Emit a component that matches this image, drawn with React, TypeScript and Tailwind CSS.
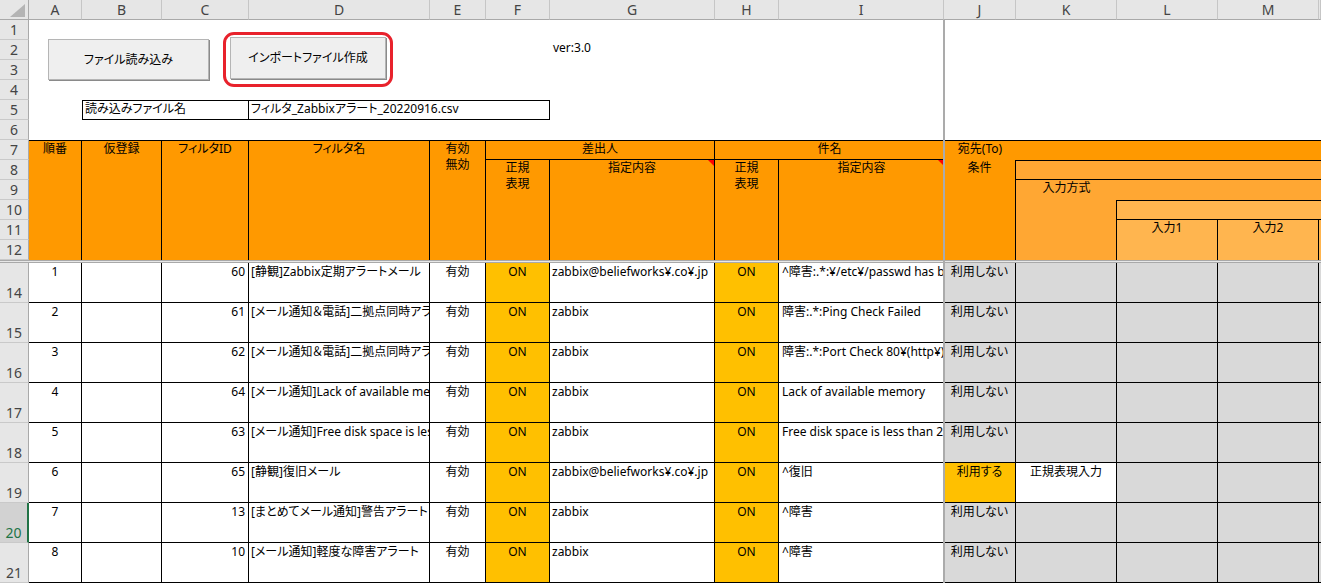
import React from "react";

const COLS =
  "grid grid-cols-[29px_53px_80px_87px_181px_56px_64px_165px_64px_165px_72px_101px_101px_101px_1fr]";
const TXT = "font-['Noto_Sans','Noto_Sans_CJK_JP',sans-serif] [font-feature-settings:'palt'] text-[12px] leading-[16px] text-black";
const HDR = "font-['Noto_Sans',sans-serif] text-[14px] text-[#444]";

const ORANGE = "bg-[#ff9900]";
const KCOL = "bg-[#ffa733]";
const LCOL = "bg-[#ffb54f]";

const letters = ["A", "B", "C", "D", "E", "F", "G", "H", "I", "J", "K", "L", "M", ""];

type Row = {
  n: number;
  a: string;
  c: string;
  d: string;
  g: string;
  i: string;
  use?: boolean;
  sel?: boolean;
};

const rows: Row[] = [
  { n: 14, a: "1", c: "60", d: "[静観]Zabbix定期アラートメール", g: "zabbix@beliefworks¥.co¥.jp", i: "^障害:.*:¥/etc¥/passwd has been changed" },
  { n: 15, a: "2", c: "61", d: "[メール通知＆電話]二拠点同時アラート", g: "zabbix", i: "障害:.*:Ping Check Failed" },
  { n: 16, a: "3", c: "62", d: "[メール通知＆電話]二拠点同時アラート", g: "zabbix", i: "障害:.*:Port Check 80¥(http¥)" },
  { n: 17, a: "4", c: "64", d: "[メール通知]Lack of available memory", g: "zabbix", i: "Lack of available memory" },
  { n: 18, a: "5", c: "63", d: "[メール通知]Free disk space is less than", g: "zabbix", i: "Free disk space is less than 20%" },
  { n: 19, a: "6", c: "65", d: "[静観]復旧メール", g: "zabbix@beliefworks¥.co¥.jp", i: "^復旧", use: true },
  { n: 20, a: "7", c: "13", d: "[まとめてメール通知]警告アラート", g: "zabbix", i: "^障害", sel: true },
  { n: 21, a: "8", c: "10", d: "[メール通知]軽度な障害アラート", g: "zabbix", i: "^障害" },
];

function RowHead({ n, bottom }: { n: number; bottom?: boolean }) {
  return (
    <div
      className={`${HDR} h-full bg-[#e6e6e6] border-b border-r border-b-[#c9c9c9] border-r-[#a9a9a9] flex justify-center ${
        bottom ? "items-end pb-[1px]" : "items-center"
      }`}
    >
      {n}
    </div>
  );
}

function Tri() {
  return (
    <svg className="absolute right-0 top-0" width="6" height="6" viewBox="0 0 6 6">
      <polygon points="0,0 6,0 6,6" fill="#ff0000" />
    </svg>
  );
}

export default function App() {
  return (
    <div className={`relative w-[1321px] h-[583px] overflow-hidden bg-white ${TXT}`}>
      {/* column header */}
      <div className={`${COLS} h-[20px]`}>
        <div className="relative bg-[#e6e6e6] border-r border-b border-[#a9a9a9]">
          <svg className="absolute left-0 top-0" width="29" height="20" viewBox="0 0 29 20">
            <polygon points="25,4 25,17 10,17" fill="#b4b4b4" />
          </svg>
        </div>
        {letters.map((l, i) => (
          <div
            key={i}
            className={`${HDR} bg-[#e6e6e6] border-r border-b border-r-[#c6c6c6] border-b-[#a9a9a9] flex items-center justify-center`}
          >
            {l}
          </div>
        ))}
      </div>

      {/* rows 1-6 */}
      <div className={`${COLS} grid-rows-[repeat(6,20px)]`}>
        <div className="col-start-1 row-start-1"><RowHead n={1} /></div>
        <div className="col-start-1 row-start-2"><RowHead n={2} /></div>
        <div className="col-start-1 row-start-3"><RowHead n={3} /></div>
        <div className="col-start-1 row-start-4"><RowHead n={4} /></div>
        <div className="col-start-1 row-start-5"><RowHead n={5} /></div>
        <div className="col-start-1 row-start-6"><RowHead n={6} /></div>
        <div className="col-start-8 row-start-2 pl-[3px]">ver:3.0</div>
        <div className="col-start-3 col-span-2 row-start-5 border border-black pl-[2px] whitespace-nowrap overflow-hidden">
          読み込みファイル名
        </div>
        <div className="col-start-5 col-span-3 row-start-5 border-t border-b border-r border-black pl-[2px] whitespace-nowrap overflow-hidden">
          フィルタ_Zabbixアラート_20220916.csv
        </div>
      </div>

      {/* header rows 7-12 */}
      <div className={`${COLS} grid-rows-[repeat(6,20px)]`}>
        <div className="col-start-1 row-start-1"><RowHead n={7} /></div>
        <div className="col-start-1 row-start-2"><RowHead n={8} /></div>
        <div className="col-start-1 row-start-3"><RowHead n={9} /></div>
        <div className="col-start-1 row-start-4"><RowHead n={10} /></div>
        <div className="col-start-1 row-start-5"><RowHead n={11} /></div>
        <div className="col-start-1 row-start-6"><RowHead n={12} /></div>

        <div className={`col-start-2 row-start-1 row-span-6 ${ORANGE} border-t border-r border-black text-center`}>順番</div>
        <div className={`col-start-3 row-start-1 row-span-6 ${ORANGE} border-t border-r border-black text-center`}>仮登録</div>
        <div className={`col-start-4 row-start-1 row-span-6 ${ORANGE} border-t border-r border-black text-center`}>フィルタID</div>
        <div className={`col-start-5 row-start-1 row-span-6 ${ORANGE} border-t border-r border-black text-center`}>フィルタ名</div>
        <div className={`col-start-6 row-start-1 row-span-6 ${ORANGE} border-t border-r border-black text-center`}>
          有効
          <br />
          無効
        </div>

        <div className={`col-start-7 col-span-2 row-start-1 ${ORANGE} border-t border-r border-b border-black text-center`}>差出人</div>
        <div className={`col-start-7 row-start-2 row-span-5 ${ORANGE} border-r border-black text-center`}>
          正規
          <br />
          表現
        </div>
        <div className={`relative col-start-8 row-start-2 row-span-5 ${ORANGE} border-r border-black text-center`}>
          指定内容
          <Tri />
        </div>

        <div className={`col-start-9 col-span-2 row-start-1 ${ORANGE} border-t border-b border-black text-center`}>件名</div>
        <div className={`col-start-9 row-start-2 row-span-5 ${ORANGE} border-r border-black text-center`}>
          正規
          <br />
          表現
        </div>
        <div className={`relative col-start-10 row-start-2 row-span-5 ${ORANGE} text-center`}>
          指定内容
          <Tri />
        </div>

        <div className={`col-start-11 col-span-5 row-start-1 ${ORANGE} border-t border-black`}>
          <div className="w-[72px] text-center whitespace-nowrap">宛先(To)</div>
        </div>
        <div className={`col-start-11 row-start-2 row-span-5 ${ORANGE} border-r border-black text-center`}>条件</div>
        <div className={`col-start-12 col-span-4 row-start-2 ${KCOL} border-t border-b border-black`} />
        <div className={`col-start-12 col-span-4 row-start-3 ${KCOL}`}>
          <div className="w-[101px] text-center">入力方式</div>
        </div>
        <div className={`col-start-12 row-start-4 row-span-3 ${KCOL} border-r border-black`} />
        <div className={`col-start-13 col-span-3 row-start-4 ${LCOL} border-t border-b border-black`} />
        <div className={`col-start-13 row-start-5 row-span-2 ${LCOL} border-r border-black text-center`}>入力1</div>
        <div className={`col-start-14 row-start-5 row-span-2 ${LCOL} border-r border-black text-center`}>入力2</div>
        <div className={`col-start-15 row-start-5 row-span-2 ${LCOL}`} />
      </div>

      {/* freeze divider */}
      <div className="h-[3px] border-t border-b border-[#a9a9a9] bg-[#e8e8e8]" />

      {/* data rows */}
      {rows.map((r) => (
        <div key={r.n} className={`${COLS} h-[40px]`}>
          {r.sel ? (
            <div className="font-['Noto_Sans',sans-serif] text-[14px] text-[#217346] bg-[#d2d2d2] border-b border-b-[#c9c9c9] border-r-2 border-r-[#217346] flex justify-center items-end pb-[1px]">
              {r.n}
            </div>
          ) : (
            <RowHead n={r.n} bottom />
          )}
          <div className="border-r border-b border-black text-center pt-[1px]">{r.a}</div>
          <div className="border-r border-b border-black" />
          <div className="border-r border-b border-black text-right pr-[3px] pt-[1px]">{r.c}</div>
          <div className="border-r border-b border-black pl-[2px] pt-[1px] whitespace-nowrap overflow-hidden">{r.d}</div>
          <div className="border-r border-b border-black text-center pt-[1px]">有効</div>
          <div className="bg-[#ffc000] border-r border-b border-black text-center pt-[1px]">ON</div>
          <div className="border-r border-b border-black pl-[2px] pt-[1px] whitespace-nowrap overflow-hidden">{r.g}</div>
          <div className="bg-[#ffc000] border-r border-b border-black text-center pt-[1px]">ON</div>
          <div className="border-b border-black pl-[3px] pt-[1px] whitespace-nowrap overflow-hidden">{r.i}</div>
          <div
            className={`${r.use ? "bg-[#ffc000]" : "bg-[#d9d9d9]"} border-r border-b border-black text-center pt-[1px] whitespace-nowrap`}
          >
            {r.use ? "利用する" : "利用しない"}
          </div>
          <div
            className={`${r.use ? "bg-white" : "bg-[#d9d9d9]"} border-r border-b border-black text-center pt-[1px] whitespace-nowrap`}
          >
            {r.use ? "正規表現入力" : ""}
          </div>
          <div className="bg-[#d9d9d9] border-r border-b border-black" />
          <div className="bg-[#d9d9d9] border-r border-b border-black" />
          <div className="bg-[#d9d9d9] border-b border-black" />
        </div>
      ))}

      {/* vertical freeze line */}
      <div className="absolute left-[943px] top-[20px] bottom-0 w-[2px] bg-[#ababab]" />

      {/* floating buttons */}
      <div className="absolute left-[48px] top-[39px] w-[161px] h-[41px] bg-[#efefef] border border-[#b5b5b5] shadow-[1px_1px_0_#8a8a8a] flex items-center justify-center">
        ファイル読み込み
      </div>
      <div className="absolute left-[230px] top-[37px] w-[156px] h-[42px] bg-[#efefef] border border-[#b5b5b5] shadow-[1px_1px_0_#8a8a8a] flex items-center justify-center">
        インポートファイル作成
      </div>
      <div className="absolute left-[223px] top-[32px] w-[170px] h-[55px] border-[3px] border-[#e8222c] rounded-[11px]" />
    </div>
  );
}
